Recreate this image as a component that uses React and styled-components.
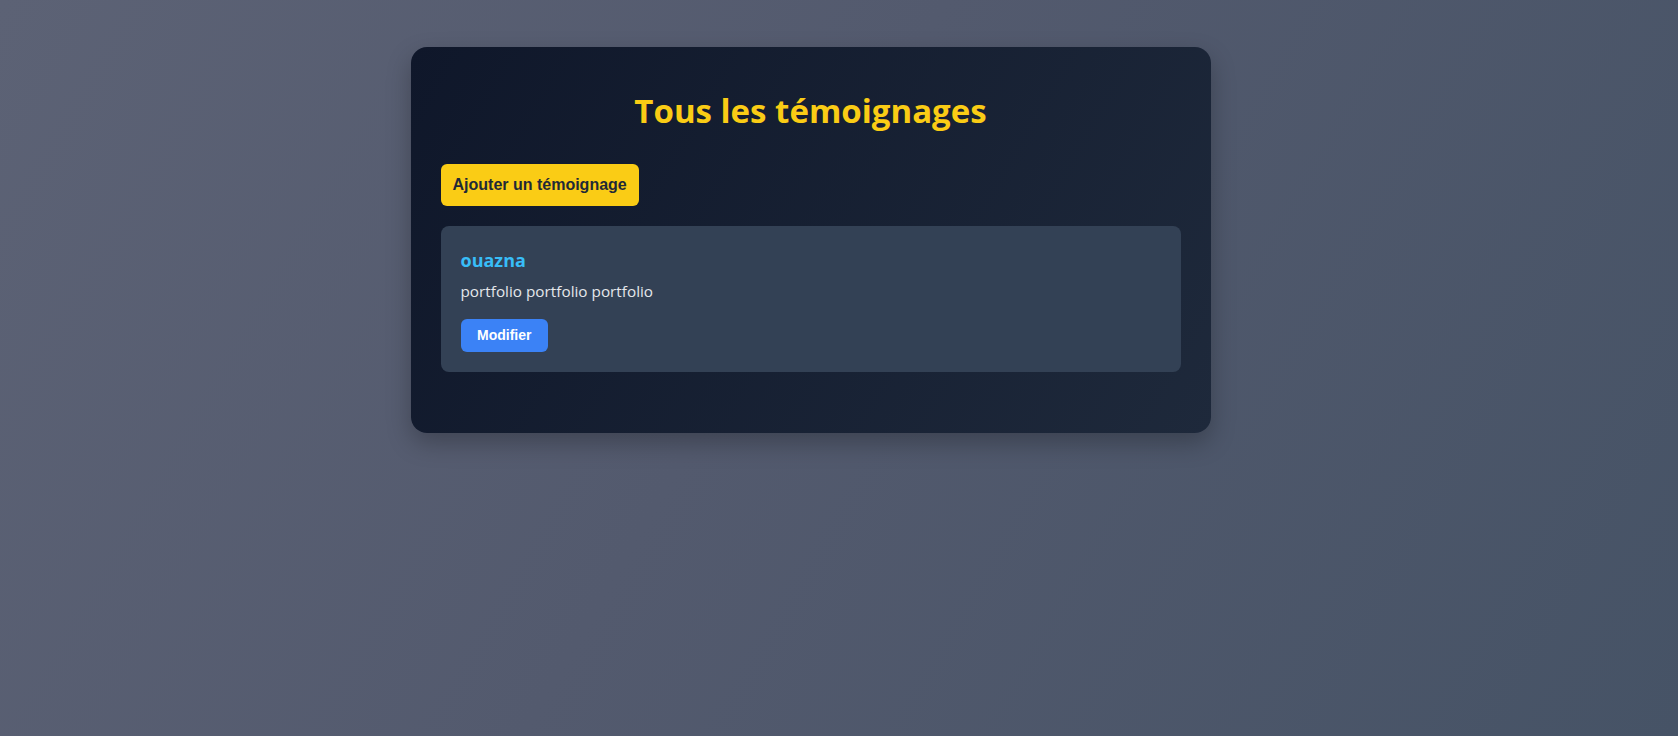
import React from "react";
import styled, { createGlobalStyle } from "styled-components";

const GlobalStyle = createGlobalStyle`
  html, body {
    margin: 0;
    padding: 0;
  }
  body {
    min-height: 100vh;
    background: linear-gradient(120deg, #5c6275 0%, #535a6e 45%, #465366 100%);
    font-family: "Open Sans", "Noto Sans", sans-serif;
  }
`;

const Page = styled.main`
  display: flex;
  justify-content: center;
  padding: 47px 57px 0 0;
  min-height: 100vh;
  box-sizing: border-box;
`;

const Panel = styled.section`
  width: 800px;
  box-sizing: border-box;
  padding: 30px 30px 61px;
  border-radius: 16px;
  background: linear-gradient(120deg, #0f172a 0%, #1e293b 100%);
  box-shadow: 0 10px 25px rgba(0, 0, 0, 0.25);
  height: fit-content;
`;

const Title = styled.h2`
  margin: 10px 0 29px;
  text-align: center;
  color: #facc15;
  font-size: 33px;
  font-weight: 700;
  line-height: 48px;
`;

const Button = styled.button`
  border: none;
  cursor: pointer;
  font-family: "Liberation Sans", Arial, sans-serif;
  font-weight: 700;
  border-radius: 6px;
  font-size: ${(p) => (p.$small ? "14px" : "16px")};
  padding: ${(p) => (p.$small ? "8px 16.5px" : "12px 12px")};
  line-height: ${(p) => (p.$small ? "17px" : "18px")};
  background: ${(p) => (p.$variant === "blue" ? "#3b82f6" : "#facc15")};
  color: ${(p) => (p.$variant === "blue" ? "#ffffff" : "#1f2937")};
`;

const List = styled.div`
  display: flex;
  flex-direction: column;
  gap: 20px;
  margin-top: 20px;
`;

const Item = styled.article`
  background: #334155;
  border-radius: 8px;
  padding: 20px;
`;

const Name = styled.h3`
  margin: 0 0 5px;
  color: #38bdf8;
  font-size: 18px;
  font-weight: 700;
  line-height: 28px;
`;

const Text = styled.p`
  margin: 0 0 15px;
  color: #e5e7eb;
  font-size: 15.3px;
  line-height: 25px;
`;

const testimonials = [
  { id: 1, name: "ouazna", message: "portfolio portfolio portfolio" },
];

export default function App() {
  return (
    <>
      <GlobalStyle />
      <Page>
        <Panel>
          <Title>Tous les témoignages</Title>
          <Button>Ajouter un témoignage</Button>
          <List>
            {testimonials.map((t) => (
              <Item key={t.id}>
                <Name>{t.name}</Name>
                <Text>{t.message}</Text>
                <Button $small $variant="blue">Modifier</Button>
              </Item>
            ))}
          </List>
        </Panel>
      </Page>
    </>
  );
}
